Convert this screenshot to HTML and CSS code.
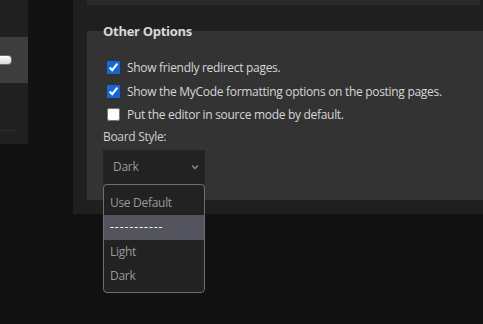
FILE: index.html
```html
<!DOCTYPE html>
<html>
<head>
<meta charset="utf-8">
<link rel="stylesheet" href="styles.css">
</head>
<body>
<div class="page">
  <aside class="side">
    <div class="side-top"></div>
    <div class="side-box"><span class="toggle"></span></div>
    <div class="side-rest"><div class="side-line"></div></div>
  </aside>
  <main class="panel">
    <div class="prev-box"></div>
    <fieldset class="opts">
      <legend class="legend">Other Options</legend>
      <label class="row"><input type="checkbox" checked><span>Show friendly redirect pages.</span></label>
      <label class="row"><input type="checkbox" checked><span>Show the MyCode formatting options on the posting pages.</span></label>
      <label class="row"><input type="checkbox"><span>Put the editor in source mode by default.</span></label>
      <div class="field-label">Board Style:</div>
      <div class="select-wrap">
        <div class="select">
          <span>Dark</span>
          <svg class="chev" width="8" height="6" viewBox="0 0 8 6"><path d="M1 1.5 L4 4.5 L7 1.5" fill="none" stroke="#8a8a8a" stroke-width="1.5"/></svg>
        </div>
        <ul class="dropdown">
          <li>Use Default</li>
          <li class="hl">-----------</li>
          <li>Light</li>
          <li>Dark</li>
        </ul>
      </div>
    </fieldset>
  </main>
</div>
</body>
</html>
```
FILE: styles.css
```css
html, body {
  margin: 0;
  padding: 0;
  background: #111111;
  font-family: "Open Sans", "Noto Sans", sans-serif;
  font-size: 12px;
  letter-spacing: -0.3px;
  color: #d6d6d6;
}
.page {
  display: flex;
  align-items: flex-start;
  gap: 45px;
  width: 483px;
  height: 324px;
  overflow: hidden;
}
.side {
  width: 28px;
  flex: none;
  display: flex;
  flex-direction: column;
}
.side-top {
  height: 37px;
  background: #202020;
}
.side-box {
  height: 46px;
  background: #3d3d3d;
  display: flex;
  align-items: center;
}
.toggle {
  display: block;
  width: 11px;
  height: 8px;
  background: linear-gradient(#ffffff, #d8d8d8);
  border-radius: 0 3px 3px 0;
  box-shadow: 0 0 0 1px #6a6a6a;
}
.side-rest {
  height: 61px;
  background: #202020;
  display: flex;
  flex-direction: column;
  justify-content: flex-end;
  padding-bottom: 13px;
  box-sizing: border-box;
}
.side-line {
  width: 15px;
  height: 1px;
  background: #2e2e2e;
}
.panel {
  flex: 1;
  min-width: 0;
  background: #1f1f1f;
  height: 214px;
  padding-left: 14px;
  box-sizing: border-box;
  display: flex;
  flex-direction: column;
}
.prev-box {
  height: 5px;
  background: #2a2a2a;
  margin-right: 3px;
}
.opts {
  margin: 17px 0 0 0;
  border: 0;
  padding: 16px 16px 16px 16px;
  background: #333333;
  min-width: 0;
  position: relative;
}
.legend {
  padding: 0;
  font-size: 13px;
  font-weight: 700;
  line-height: 18px;
  color: #d8d8d8;
}
.row {
  display: flex;
  align-items: center;
  height: 23.5px;
  white-space: nowrap;
}
.row input {
  margin: 0 7px 0 4px;
  width: 13px;
  height: 13px;
  accent-color: #1266d6;
}
.field-label {
  margin-top: 1px;
  line-height: 18px;
  color: #cfcfcf;
}
.select-wrap {
  position: relative;
  margin-top: 4px;
  width: 102px;
}
.select {
  height: 34px;
  background: #222222;
  display: flex;
  align-items: center;
  justify-content: space-between;
  padding: 0 6px 0 10px;
  color: #9a9a9a;
  box-sizing: border-box;
}
.chev {
  display: block;
}
.dropdown {
  position: absolute;
  top: 34px;
  left: 0;
  width: 102px;
  box-sizing: border-box;
  margin: 0;
  padding: 6px 0 3px;
  list-style: none;
  background: #222222;
  border: 1px solid #6e6e6e;
  border-radius: 4px;
  color: #9a9a9a;
  z-index: 2;
}
.dropdown li {
  height: 24.5px;
  line-height: 24.5px;
  padding-left: 6px;
}
.dropdown li.hl {
  background: #54545e;
  color: #ffffff;
  letter-spacing: 1px;
}
```
